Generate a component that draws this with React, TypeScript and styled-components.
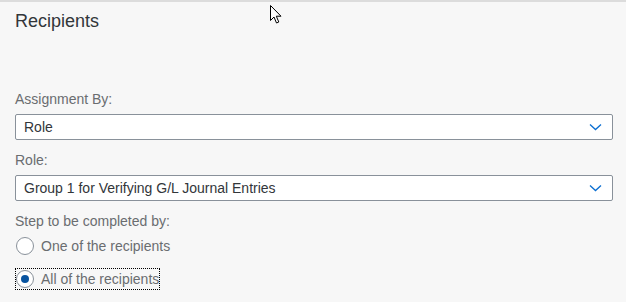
import React from 'react'
import styled, { createGlobalStyle } from 'styled-components'

const GlobalStyle = createGlobalStyle`
  html, body {
    margin: 0;
    padding: 0;
    background: #f7f7f7;
  }
  body {
    font-family: "Liberation Sans", Arial, sans-serif;
  }
`

const Page = styled.div`
  position: relative;
  width: 626px;
  height: 302px;
  box-sizing: border-box;
  border-top: 2px solid #dcdcdc;
  background: #f7f7f7;
  padding: 7px 13px 0 15px;
`

const Title = styled.h2`
  margin: 0 0 57px;
  font-size: 18px;
  font-weight: normal;
  line-height: 24px;
  color: #32363a;
`

const Field = styled.div`
  display: flex;
  flex-direction: column;
  margin-bottom: 11px;
`

const Label = styled.label`
  font-size: 14px;
  line-height: 18px;
  color: #6a6d70;
  margin-bottom: 6px;
`

const StepLabel = styled(Label)`
  display: block;
  margin-bottom: 5px;
`

const Select = styled.div`
  display: flex;
  align-items: center;
  justify-content: space-between;
  height: 26px;
  box-sizing: border-box;
  border: 1px solid #89919a;
  border-radius: 2px;
  background: #fff;
  padding: 0 10px 0 8px;
  font-size: 14px;
  color: #32363a;
`

const RadioRow = styled.div<{ $focused?: boolean }>`
  display: flex;
  align-items: center;
  gap: 7px;
  width: fit-content;
  height: 22px;
  padding: 0 1px;
  outline: ${p => (p.$focused ? '1px dotted #000' : 'none')};
  outline-offset: -1px;
  font-size: 14px;
  color: #6a6d70;
  margin-bottom: 11px;
`

const RadioCircle = styled.span<{ $checked?: boolean }>`
  position: relative;
  width: 18px;
  height: 18px;
  box-sizing: border-box;
  border-radius: 50%;
  border: 1px solid #89919a;
  background: #fff;

  &::after {
    content: '';
    display: ${p => (p.$checked ? 'block' : 'none')};
    position: absolute;
    left: 4px;
    top: 4px;
    width: 8px;
    height: 8px;
    border-radius: 50%;
    background: #0854a0;
  }
`

const Cursor = styled.svg`
  position: absolute;
  left: 270px;
  top: 3px;
`

function Chevron() {
  return (
    <svg width='13' height='8' viewBox='0 0 13 8'>
      <path d='M1 1.5 L6.5 6.5 L12 1.5' fill='none' stroke='#0a6ed1' strokeWidth='1.3' />
    </svg>
  )
}

export default function App() {
  return (
    <Page>
      <GlobalStyle />
      <Cursor width='14' height='20' viewBox='0 0 14 20'>
        <path d='M0.5 0.5 L0.5 15.5 L4 12 L6.5 18 L8.8 17 L6.3 11.2 L11 11.2 Z' fill='#fff' stroke='#000' strokeWidth='1' />
      </Cursor>
      <Title>Recipients</Title>
      <Field>
        <Label>Assignment By:</Label>
        <Select>
          <span>Role</span>
          <Chevron />
        </Select>
      </Field>
      <Field>
        <Label>Role:</Label>
        <Select>
          <span>Group 1 for Verifying G/L Journal Entries</span>
          <Chevron />
        </Select>
      </Field>
      <StepLabel as='div'>Step to be completed by:</StepLabel>
      <RadioRow>
        <RadioCircle />
        <span>One of the recipients</span>
      </RadioRow>
      <RadioRow $focused>
        <RadioCircle $checked />
        <span>All of the recipients</span>
      </RadioRow>
    </Page>
  )
}
